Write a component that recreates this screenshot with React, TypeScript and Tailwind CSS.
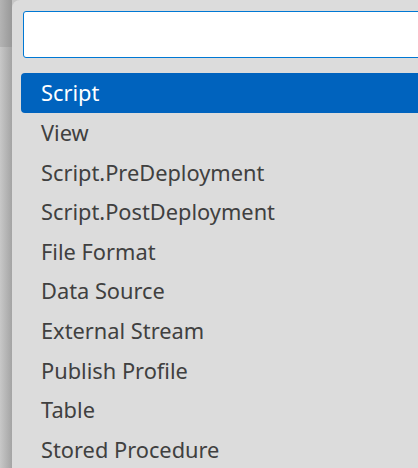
const items = [
  'Script',
  'View',
  'Script.PreDeployment',
  'Script.PostDeployment',
  'File Format',
  'Data Source',
  'External Stream',
  'Publish Profile',
  'Table',
  'Stored Procedure',
];

export default function App() {
  return (
    <div className="w-[418px] h-[468px] flex overflow-hidden bg-[#c6c6c6] font-['Noto_Sans',sans-serif]">
      {/* shadow strip behind the dropdown */}
      <div className="w-[12px] flex flex-col shrink-0">
        <div className="h-[47px] bg-gradient-to-r from-[#b4b4b4] to-[#989898]" />
        <div className="flex-1 bg-gradient-to-r from-[#c8c8c8] to-[#a4a4a4]" />
      </div>

      <div className="flex-1 bg-[#dcdcdc] rounded-tl-[8px] pt-[11px] min-w-0">
        <div className="ml-[11px] w-[420px] h-[47px] bg-white border border-[#0078d4] rounded-[3px]" />

        <ul className="mt-[15px]">
          {items.map((item, i) => (
            <li
              key={item}
              className={
                i === 0
                  ? 'ml-[9px] w-[420px] h-[39.6px] flex items-center pl-[20px] pt-[2px] rounded-[4px] bg-[#0063be] text-white text-[21.8px]'
                  : 'ml-[9px] h-[39.6px] flex items-center pl-[20px] pt-[2px] text-[#404040] text-[21.8px]'
              }
            >
              {item}
            </li>
          ))}
        </ul>
      </div>
    </div>
  );
}
